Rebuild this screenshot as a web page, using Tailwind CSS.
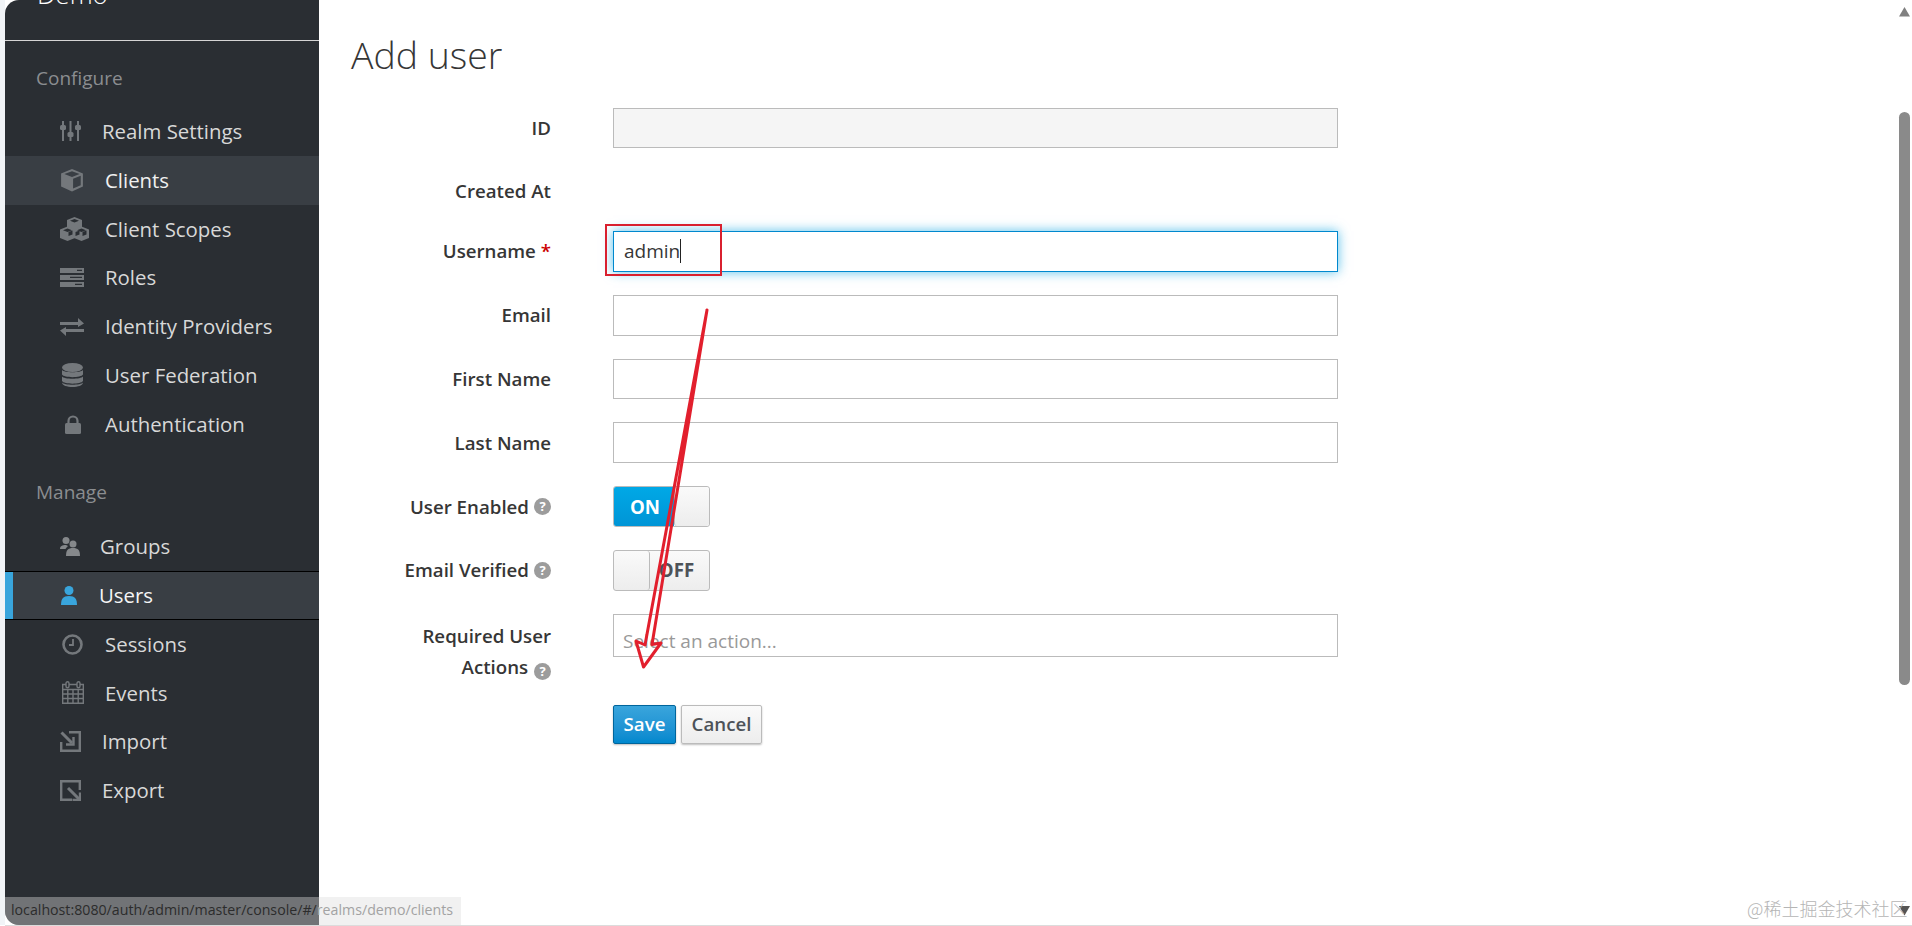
<!DOCTYPE html>
<html lang="en">
<head>
    <meta charset="UTF-8">
    <title>Add user</title>
    <script src="https://cdn.jsdelivr.net/npm/@tailwindcss/browser@4"></script>
</head>
<body class="h-[926px] w-[1912px] overflow-hidden bg-white font-['Open_Sans',sans-serif]">
<div class="relative flex h-[926px] w-[1912px] pb-px">
    <!-- window edge -->
    <div class="w-[5px] shrink-0 bg-[#f1f4f7]"></div>

    <!-- sidebar -->
    <aside class="w-[314px] shrink-0 overflow-hidden rounded-l-[14px] bg-[#2a2e33] text-[20.400px] text-[#d8d8d8]">
        <div class="h-[41px] overflow-hidden border-b border-[#d5d5d5] pl-[32px]">
            <p class="-mt-[21px] text-[26px] leading-[30px] font-light text-white">Demo</p>
        </div>

        <h2 class="h-[66px] pt-[23px] pl-[31px] text-[19px] leading-[28px] font-normal text-[#8b8d90]">Configure</h2>

        <a class="flex h-[48.800px] items-center pl-[55px]">
            <span class="w-[42px]">
                <svg width="21" height="22" viewBox="0 0 21 22" fill="#74787c"><rect x="2" y="1" width="2" height="20"/><rect x="9.500" y="1" width="2" height="20"/><rect x="17" y="1" width="2" height="20"/><rect x="0" y="5" width="6" height="5" rx="1.500"/><rect x="7.500" y="12" width="6" height="5" rx="1.500"/><rect x="15" y="5" width="6" height="5" rx="1.500"/></svg>
            </span>
            Realm Settings
        </a>
        <a class="flex h-[48.800px] items-center bg-[#393e44] pl-[55px] text-[#f0f0f0]">
            <span class="w-[45px]">
                <svg width="24" height="24" viewBox="0 0 22 22"><path d="M11 1 21 5v12l-10 4.500L1 17V5z" fill="#74787c"/><path d="M11 3 18 5.600 11 8.200 4 5.600z" fill="#393e44"/><path d="M12 9.800l7-2.600v8.600l-7 3z" fill="#393e44"/></svg>
            </span>
            Clients
        </a>
        <a class="flex h-[48.800px] items-center pl-[55px]">
            <span class="w-[45px]">
                <svg width="29" height="24" viewBox="0 0 29 24" fill="#74787c"><path d="M14.500 0l7.500 3v8.500l-7.500 3-7.500-3V3z"/><path d="M7.500 9.500l7.500 3V21l-7.500 3L0 21v-8.500z"/><path d="M21.500 9.500l7.500 3V21l-7.500 3-7.500-3v-8.500z"/><path d="M14.500 2l4.500 1.700-4.500 1.700L10 3.700zM7.500 11.500l4.500 1.700-4.500 1.700L3 13.200zM21.500 11.500l4.500 1.700-4.500 1.700-4.500-1.700zM15.500 15l4-1.500v4l-4 1.600zM8.500 15l4-1.500v4l-4 1.600zM22.500 15l4-1.500v4l-4 1.600z" fill="#2a2e33"/></svg>
            </span>
            Client Scopes
        </a>
        <a class="flex h-[48.800px] items-center pl-[55px]">
            <span class="w-[45px]">
                <svg width="24" height="19" viewBox="0 0 24 19" fill="#74787c"><path d="M0 0h24v5H0zM0 7h24v5H0zM0 14h24v5H0z"/><path d="M17 1.800h5v1.200h-5zM10 8.800h12v1.200H10zM15 15.800h7V17h-7z" fill="#2a2e33"/></svg>
            </span>
            Roles
        </a>
        <a class="flex h-[48.800px] items-center pl-[55px]">
            <span class="w-[45px]">
                <svg width="24" height="18" viewBox="0 0 24 18" fill="#74787c"><path d="M0 4h18V0l6 5.500-6 3.500V7H0zM24 14H6v4l-6-5.500L6 9v2h18z"/></svg>
            </span>
            Identity Providers
        </a>
        <a class="flex h-[48.800px] items-center pl-[57px]">
            <span class="w-[43px]">
                <svg width="21" height="24" viewBox="0 0 21 24" fill="#74787c"><ellipse cx="10.500" cy="4.500" rx="10.500" ry="4.500"/><path d="M0 7c2 3 19 3 21 0v4.500c-2 3.500-19 3.500-21 0zM0 13.500c2 3 19 3 21 0V18c-2 3.500-19 3.500-21 0z"/><path d="M0 19.500c2 3 19 3 21 0c0 6-21 6-21 0z"/></svg>
            </span>
            User Federation
        </a>
        <a class="flex h-[48.800px] items-center pl-[60px]">
            <span class="w-[40px]">
                <svg width="16" height="19" viewBox="0 0 16 19" fill="none"><path d="M3.500 9V6a4.500 4.500 0 0 1 9 0v3" stroke="#74787c" stroke-width="2.200"/><rect y="8" width="16" height="11" rx="1.500" fill="#74787c"/></svg>
            </span>
            Authentication
        </a>

        <h2 class="h-[73.500px] pt-[29px] pl-[31px] text-[19px] leading-[28px] font-normal text-[#8b8d90]">Manage</h2>

        <a class="flex h-[48.800px] items-center pl-[55px]">
            <span class="w-[40px]">
                <svg width="20" height="19" viewBox="0 0 20 19" fill="#85888b"><circle cx="6" cy="3.500" r="3.500"/><path d="M0 12c0-3 2-4 6-4l2 1c-2 2-2.500 3-2.500 3z"/><circle cx="13" cy="7" r="3.500"/><path d="M6 19c0-6 2-8 7-8s7 2 7 8z"/></svg>
            </span>
            Groups
        </a>
        <a class="relative flex h-[48.800px] items-center border-y border-black bg-[#393e44] pl-[56px] text-[#f5f5f5]">
            <span class="absolute top-0 bottom-0 left-0 w-[8px] bg-[#39a5dc]"></span>
            <span class="w-[38px]">
                <svg width="16" height="19" viewBox="0 0 16 19" fill="#39a5dc"><circle cx="8" cy="4.500" r="4.500"/><path d="M0 19c0-6 2-9 8-9s8 3 8 9z"/></svg>
            </span>
            Users
        </a>
        <a class="flex h-[48.800px] items-center pl-[57px]">
            <span class="w-[43px]">
                <svg width="21" height="21" viewBox="0 0 21 21" fill="none" stroke="#74787c"><circle cx="10.500" cy="10.500" r="9" stroke-width="2.600"/><path d="M11 5v6H7" stroke-width="1.800"/></svg>
            </span>
            Sessions
        </a>
        <a class="flex h-[48.800px] items-center pl-[57px]">
            <span class="w-[43px]">
                <svg width="22" height="23" viewBox="0 0 22 23" fill="none" stroke="#74787c" stroke-width="1.400"><path d="M.700 3.500h20.600v18.800H.700z"/><path d="M.700 8.500h20.600M.700 13h20.600M.700 17.500h20.600M5.800 8.500v13.800M11 8.500v13.800M16.200 8.500v13.800"/><rect x="4" y=".700" width="3" height="6" rx="1.500" fill="#2a2e33"/><rect x="15" y=".700" width="3" height="6" rx="1.500" fill="#2a2e33"/></svg>
            </span>
            Events
        </a>
        <a class="flex h-[48.800px] items-center pl-[55px]">
            <span class="w-[42px]">
                <svg width="21" height="21" viewBox="0 0 21 21" fill="none" stroke="#74787c" stroke-width="2.400"><path d="M9 1.200h10.800V19.800H1.200V11"/><path d="M1.500 1.500 12 12" stroke-width="3"/><path d="M13.500 6v7.500H6" stroke-width="2.400"/></svg>
            </span>
            Import
        </a>
        <a class="flex h-[48.800px] items-center pl-[55px]">
            <span class="w-[42px]">
                <svg width="21" height="21" viewBox="0 0 21 21" fill="none" stroke="#74787c" stroke-width="2.400"><path d="M12 19.800H1.200V1.200h18.600V10"/><path d="M8 8 19 19" stroke-width="3"/><path d="M20 12.500V20h-7.500" stroke-width="2.400"/></svg>
            </span>
            Export
        </a>
    </aside>

    <!-- content -->
    <main class="flex-1 pl-[32px] text-[18.700px] font-semibold text-[#363636]">
        <h1 class="h-[108px] pt-[32px] text-[37.400px] leading-[46px] font-light text-[#363636]">Add user</h1>

        <div class="mb-[23px] flex h-[40px] items-center">
            <label class="mr-[62px] w-[200px] text-right">ID</label>
            <div class="h-full w-[725px] border border-[#bbb] bg-[#f5f5f5]"></div>
        </div>
        <div class="mb-[20px] flex h-[40px] items-center">
            <label class="mr-[62px] w-[200px] text-right">Created At</label>
        </div>
        <div class="mb-[23px] flex h-[40.800px] items-center">
            <label class="mr-[62px] w-[200px] text-right">Username <span class="text-[#cc0000]">*</span></label>
            <div class="flex h-full w-[725px] items-center border border-[#0088ce] pl-[10px] text-[19px] font-normal text-[#363636] shadow-[0_0_11px_rgba(0,160,225,0.65)]">admin<span class="h-[24px] w-px bg-[#222]"></span></div>
        </div>
        <div class="mb-[23px] flex h-[40.800px] items-center">
            <label class="mr-[62px] w-[200px] text-right">Email</label>
            <div class="h-full w-[725px] border border-[#bbb]"></div>
        </div>
        <div class="mb-[23px] flex h-[40.800px] items-center">
            <label class="mr-[62px] w-[200px] text-right">First Name</label>
            <div class="h-full w-[725px] border border-[#bbb]"></div>
        </div>
        <div class="mb-[23px] flex h-[40.800px] items-center">
            <label class="mr-[62px] w-[200px] text-right">Last Name</label>
            <div class="h-full w-[725px] border border-[#bbb]"></div>
        </div>
        <div class="mb-[23px] flex h-[40.800px] items-center">
            <label class="mr-[62px] flex w-[200px] items-center justify-end gap-[5px]">User Enabled <span class="flex h-[17px] w-[17px] items-center justify-center rounded-full bg-[#9c9c9c] text-[13px] font-bold text-white">?</span></label>
            <div class="flex h-full w-[97px] overflow-hidden rounded-[3px] border border-[#bbb]">
                <span class="flex w-[60px] items-center justify-center bg-gradient-to-b from-[#00a8e6] to-[#0095d6] pl-[2px] font-bold text-white">ON</span>
                <span class="flex-1 rounded-[3px] border-l border-[#bbb] bg-gradient-to-b from-[#fafafa] to-[#ededed]"></span>
            </div>
        </div>
        <div class="mb-[23px] flex h-[40.800px] items-center">
            <label class="mr-[62px] flex w-[200px] items-center justify-end gap-[5px]">Email Verified <span class="flex h-[17px] w-[17px] items-center justify-center rounded-full bg-[#9c9c9c] text-[13px] font-bold text-white">?</span></label>
            <div class="flex h-full w-[97px] overflow-hidden rounded-[3px] border border-[#bbb] bg-gradient-to-b from-[#fafafa] to-[#ededed]">
                <span class="w-[36px] rounded-[3px] border-r border-[#bbb]"></span>
                <span class="flex flex-1 items-center justify-center pr-[6px] font-bold text-[#4d5258]">OFF</span>
            </div>
        </div>
        <div class="flex h-[43px]">
            <label class="mr-[62px] w-[200px] pt-[6px] text-right leading-[31px]">Required User<br>Actions <span class="ml-[1px] inline-flex h-[17px] w-[17px] items-center justify-center rounded-full bg-[#9c9c9c] align-[-2px] text-[13px] font-bold text-white">?</span></label>
            <div class="h-full w-[725px] border border-[#bbb] pt-[11px] pl-[9px] text-[19px] leading-[30px] font-normal text-[#999]">Select an action...</div>
        </div>
        <div class="mt-[48px] ml-[262px] flex gap-[5px]">
            <button class="h-[39px] w-[63px] rounded-[2px] border border-[#00659c] bg-gradient-to-b from-[#39a5dc] to-[#0088ce] font-semibold text-white shadow-[0_1px_2px_rgba(0,0,0,0.25)]">Save</button>
            <button class="h-[39px] w-[81px] rounded-[2px] border border-[#bbb] bg-gradient-to-b from-[#fafafa] to-[#ededed] font-semibold text-[#4d5258] shadow-[0_1px_2px_rgba(0,0,0,0.25)]">Cancel</button>
        </div>
    </main>

    <!-- red annotations -->
    <div class="absolute top-[224px] left-[605px] h-[52px] w-[117px] border-2 border-[#d9202f]"></div>
    <svg class="absolute top-0 left-0" width="1912" height="926" fill="none"><path d="M707 310 645 645 636 641 643.500 667 661 643 652 644.500Z" stroke="#e21f2d" stroke-width="3" stroke-linejoin="round"/></svg>

    <!-- page scrollbar -->
    <svg class="absolute top-[7px] left-[1899px]" width="11" height="10" fill="#808080"><path d="M5.500 0 11 9.500H0z"/></svg>
    <div class="absolute top-[112px] left-[1899px] h-[573px] w-[11px] rounded-full bg-[#8a8a8a]"></div>
    <svg class="absolute top-[906px] left-[1899px]" width="11" height="10" fill="#555"><path d="M0 0h11L5.500 9.500z"/></svg>

    <!-- watermark -->
    <div class="absolute top-[895px] left-[1747px] text-[18px] leading-[26px] font-light text-[#b5b5b5] font-['Noto_Sans_CJK_SC',sans-serif]">@稀土掘金技术社区</div>

    <!-- link preview -->
    <div class="absolute top-[897px] left-[5px] h-[28px] w-[456px] rounded-bl-[14px] bg-[#dddddd]/40 pl-[6px] text-[14.200px] leading-[26px] font-normal whitespace-nowrap text-[#2c2c2c]">localhost:8080/auth/admin/master/console/#/<span class="text-[#a3a3a3]">realms/demo/clients</span></div>
    <div class="absolute right-0 bottom-0 left-[5px] h-px bg-[#dcdcdc]"></div>
</div>
</body>
</html>
